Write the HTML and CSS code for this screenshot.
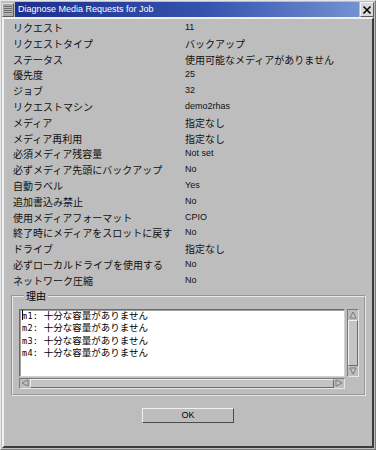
FILE: index.html
```html
<!DOCTYPE html>
<html lang="ja">

<head>
    <meta charset="UTF-8">
    <title>Diagnose Media Requests for Job</title>
    <link rel="stylesheet" href="styles.css">
</head>

<body>
    <div class="window">
        <div class="titlebar">
            <span class="menubtn"><span class="bar"></span></span>
            <span class="title">Diagnose Media Requests for Job</span>
            <span class="closebtn">
                <svg width="10" height="10" viewBox="0 0 10 10">
                    <path d="M1.5 1.5 L8.5 8.5 M8.5 1.5 L1.5 8.5" stroke="#000" stroke-width="1.6" />
                </svg>
            </span>
        </div>
        <div class="client">
            <div class="props">
                <span class="lbl">リクエスト</span><span class="val asc">11</span>
                <span class="lbl">リクエストタイプ</span><span class="val">バックアップ</span>
                <span class="lbl">ステータス</span><span class="val">使用可能なメディアがありません</span>
                <span class="lbl">優先度</span><span class="val asc">25</span>
                <span class="lbl">ジョブ</span><span class="val asc">32</span>
                <span class="lbl">リクエストマシン</span><span class="val asc">demo2rhas</span>
                <span class="lbl">メディア</span><span class="val">指定なし</span>
                <span class="lbl">メディア再利用</span><span class="val">指定なし</span>
                <span class="lbl">必須メディア残容量</span><span class="val asc">Not set</span>
                <span class="lbl">必ずメディア先頭にバックアップ</span><span class="val asc">No</span>
                <span class="lbl">自動ラベル</span><span class="val asc">Yes</span>
                <span class="lbl">追加書込み禁止</span><span class="val asc">No</span>
                <span class="lbl">使用メディアフォーマット</span><span class="val asc">CPIO</span>
                <span class="lbl">終了時にメディアをスロットに戻す</span><span class="val asc">No</span>
                <span class="lbl">ドライブ</span><span class="val">指定なし</span>
                <span class="lbl">必ずローカルドライブを使用する</span><span class="val asc">No</span>
                <span class="lbl">ネットワーク圧縮</span><span class="val asc">No</span>
            </div>

            <fieldset class="group">
                <legend>理由</legend>
                <div class="scrollarea">
                    <div class="textbox">
                        <div class="line"><span class="caret"></span><span class="mono">m1: </span>十分な容量がありません</div>
                        <div class="line"><span class="mono">m2: </span>十分な容量がありません</div>
                        <div class="line"><span class="mono">m3: </span>十分な容量がありません</div>
                        <div class="line"><span class="mono">m4: </span>十分な容量がありません</div>
                    </div>
                    <div class="vscroll">
                        <span class="arrow">
                            <svg width="8" height="8" viewBox="0 0 8 8"><path d="M4 1 L7 7 L1 7 Z" fill="#c8c8c8" stroke="#7a7a7a" /></svg>
                        </span>
                        <span class="thumb"></span>
                        <span class="arrow">
                            <svg width="8" height="8" viewBox="0 0 8 8"><path d="M1 1 L7 1 L4 7 Z" fill="#c8c8c8" stroke="#7a7a7a" /></svg>
                        </span>
                    </div>
                    <div class="hscroll">
                        <span class="arrow">
                            <svg width="8" height="8" viewBox="0 0 8 8"><path d="M1 4 L7 1 L7 7 Z" fill="#c8c8c8" stroke="#7a7a7a" /></svg>
                        </span>
                        <span class="thumb"></span>
                        <span class="arrow">
                            <svg width="8" height="8" viewBox="0 0 8 8"><path d="M7 4 L1 1 L1 7 Z" fill="#c8c8c8" stroke="#7a7a7a" /></svg>
                        </span>
                    </div>
                </div>
            </fieldset>

            <div class="actions">
                <span class="button">OK</span>
            </div>
        </div>
    </div>
</body>

</html>
```

FILE: styles.css
```css
* {
    box-sizing: border-box;
}

body {
    margin: 0;
    background-color: #bdbdbd;
    font-family: "Noto Sans CJK JP", "DejaVu Sans", sans-serif;
    font-size: 10px;
    color: #000;
}

.window {
    width: 376px;
    height: 450px;
    border: 1px solid;
    border-color: #e6e6e6 #7a7a7a #7a7a7a #e6e6e6;
    padding: 1px;
    display: flex;
    flex-direction: column;
    background-color: #bdbdbd;
}

/* title bar */
.titlebar {
    height: 15px;
    display: flex;
    align-items: center;
}

.menubtn {
    width: 12px;
    height: 14px;
    background-color: #a8a8a8;
    border: 1px solid;
    border-color: #e0e0e0 #5a5a5a #5a5a5a #e0e0e0;
    display: flex;
    align-items: center;
    justify-content: center;
}

.menubtn .bar {
    width: 8px;
    height: 8px;
    background: repeating-linear-gradient(to bottom, #6a6a6a 0 1px, #b8b8b8 1px 2px);
}

.title {
    flex: 1;
    height: 15px;
    margin-left: 1px;
    padding-left: 3px;
    background: linear-gradient(to right, #1d2f8f, #3553ad 55%, #7391d2);
    color: #fff;
    font-family: "Liberation Sans", Arial, sans-serif;
    font-size: 9px;
    line-height: 15px;
    white-space: nowrap;
}

.closebtn {
    width: 14px;
    height: 15px;
    margin-left: 1px;
    background-color: #d8d8d8;
    border: 1px solid;
    border-color: #f4f4f4 #5a5a5a #5a5a5a #f4f4f4;
    display: flex;
    align-items: center;
    justify-content: center;
}

/* dialog body */
.client {
    flex: 1;
    border: 2px solid;
    border-color: #f0f0f0 #3c3c3c #3c3c3c #f0f0f0;
    padding: 1px 0 0 0;
    display: flex;
    flex-direction: column;
}

.props {
    display: grid;
    grid-template-columns: 172px 1fr;
    grid-auto-rows: 15.8px;
    padding-left: 9px;
    margin-top: 0;
    line-height: 15.8px;
    white-space: nowrap;
    color: #111;
}

.val.asc {
    font-family: "Liberation Sans", Arial, sans-serif;
    font-size: 9px;
}

/* reason group */
.group {
    margin: 1px 6px 0 7px;
    padding: 7px 5px 5px 6px;
    border: 2px groove #e8e8e8;
    min-width: 0;
}

.group legend {
    padding: 0 2px;
    margin-left: 5px;
    line-height: 12px;
    font-size: 10px;
}

.scrollarea {
    display: grid;
    grid-template-columns: 1fr 12px;
    grid-template-rows: 68px 11px;
    column-gap: 2px;
    row-gap: 1px;
}

.textbox {
    background-color: #fff;
    border: 1px solid;
    border-color: #6a6a6a #d0d0d0 #d0d0d0 #6a6a6a;
    box-shadow: inset 1px 1px 0 #a0a0a0;
    padding: 0 0 0 2px;
    font-size: 9.5px;
    line-height: 11.5px;
    color: #000;
    overflow: hidden;
}

.line {
    white-space: nowrap;
}

.mono {
    font-family: "DejaVu Sans Mono", "Liberation Mono", monospace;
    font-size: 8.5px;
    color: #000;
    letter-spacing: 0.3px;
}

.caret {
    display: inline-block;
    width: 1px;
    height: 10px;
    margin-right: -1px;
    background-color: #000;
    vertical-align: -1px;
}

.vscroll,
.hscroll {
    display: flex;
    background-color: #a9a9a9;
    border: 1px solid;
    border-color: #7a7a7a #e6e6e6 #e6e6e6 #7a7a7a;
}

.vscroll {
    flex-direction: column;
}

.arrow {
    flex: 0 0 10px;
    display: flex;
    align-items: center;
    justify-content: center;
    background-color: #bdbdbd;
}

.arrow svg {
    width: 8px;
    height: 8px;
}

.thumb {
    flex: 1;
    background-color: #c4c4c4;
    border: 1px solid;
    border-color: #efefef #6a6a6a #6a6a6a #efefef;
}

/* buttons */
.actions {
    display: flex;
    justify-content: center;
    margin-top: 12px;
}

.button {
    width: 92px;
    height: 15px;
    border: 1px solid;
    border-color: #f0f0f0 #4a4a4a #4a4a4a #f0f0f0;
    background-color: #bdbdbd;
    text-align: center;
    font-family: "Liberation Sans", Arial, sans-serif;
    font-size: 9px;
    line-height: 13px;
}
```
